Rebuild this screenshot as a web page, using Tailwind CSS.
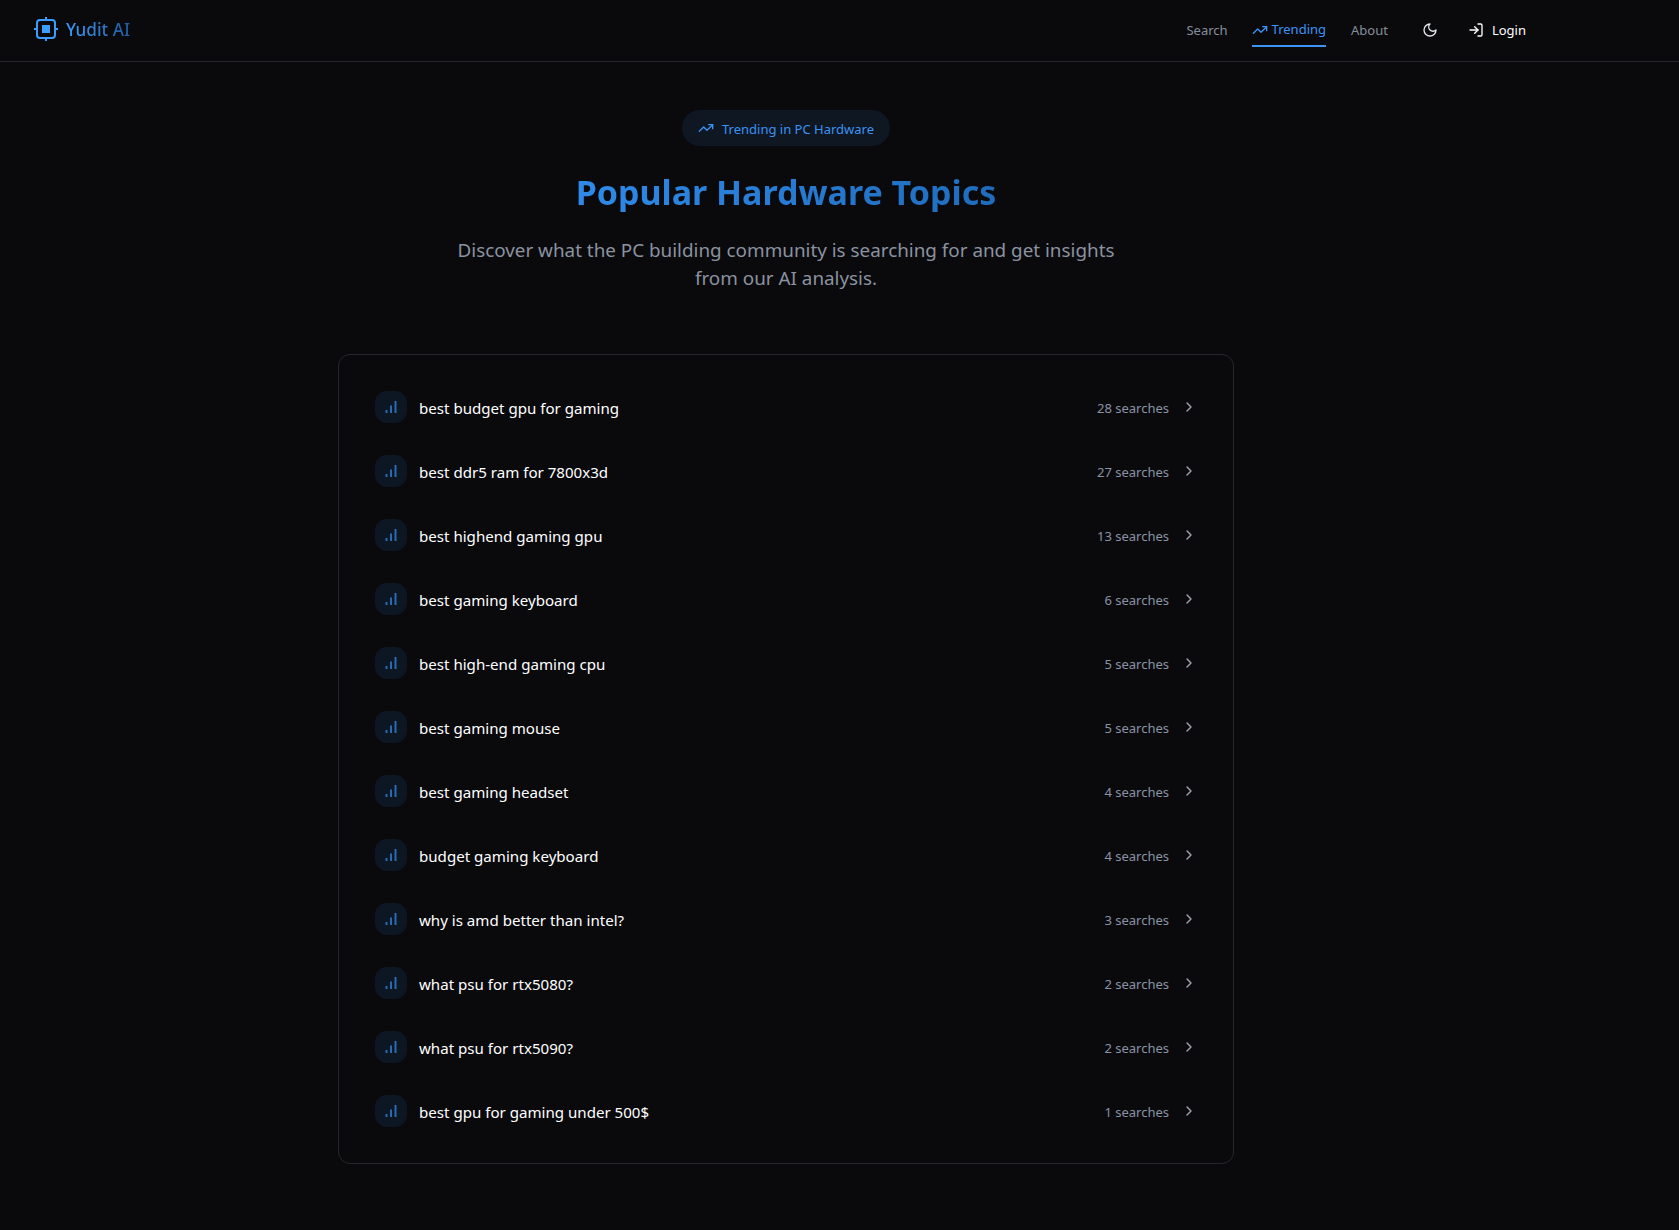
<!DOCTYPE html>
<html lang="en">
<head>
<meta charset="UTF-8">
<title>Trending</title>
<script src="https://cdn.jsdelivr.net/npm/@tailwindcss/browser@4"></script>
</head>
<body class="bg-[#0a0a0d] text-white min-h-screen font-['Noto_Sans',sans-serif]">
<header class="h-[62px] border-b border-[#25272b] flex items-center justify-between pl-[34px] pr-[153px]">
  <div class="flex items-center gap-[8px] text-[17.2px] font-medium mb-[3px]">
    <svg class="text-[#3b9dff]" width="24" height="24" viewBox="0 0 24 24" fill="none" stroke="currentColor" stroke-width="2" stroke-linecap="round" stroke-linejoin="round"><rect x="3" y="3" width="18" height="18" rx="3"/><rect x="8" y="8" width="8" height="8" fill="currentColor" stroke="none"/><path d="M12 0v3M12 21v3M0 12h3M21 12h3"/></svg>
    <span class="pt-[2px] bg-linear-to-r from-[#3b9dff] to-[#1f5c9e] bg-clip-text text-transparent">Yudit AI</span>
  </div>
  <nav class="flex items-center text-[13px] text-[#868e9b]">
    <a class="mr-[24px]">Search</a>
    <a class="mr-[25px] h-[32px] flex items-center gap-[4px] text-[#3b93f5] border-b-2 border-[#3b93f5] mt-[1px]">
      <svg width="16" height="16" viewBox="0 0 24 24" fill="none" stroke="currentColor" stroke-width="2" stroke-linecap="round" stroke-linejoin="round"><path d="M22 7 13.5 15.5 8.5 10.5 2 17"/><path d="M16 7h6v6"/></svg>
      Trending</a>
    <a class="mr-[34px]">About</a>
    <svg class="mr-[30px] mb-[2px] text-[#e5e7eb]" width="16" height="16" viewBox="0 0 24 24" fill="none" stroke="currentColor" stroke-width="2" stroke-linecap="round" stroke-linejoin="round"><path d="M12 3a6 6 0 0 0 9 9 9 9 0 1 1-9-9Z"/></svg>
    <a class="flex items-center gap-[8px] text-white">
      <svg class="mb-[2px]" width="16" height="16" viewBox="0 0 24 24" fill="none" stroke="currentColor" stroke-width="2" stroke-linecap="round" stroke-linejoin="round"><path d="M15 3h4a2 2 0 0 1 2 2v14a2 2 0 0 1-2 2h-4"/><path d="m10 17 5-5-5-5"/><path d="M15 12H3"/></svg>
      Login</a>
  </nav>
</header>
<main class="w-[1572px] flex flex-col items-center pt-[48px] pb-[66px]">
  <div class="h-[36px] px-[16px] rounded-full bg-[#0e1722] text-[#3b93f5] text-[13px] flex items-center gap-[8px]">
    <svg width="16" height="16" viewBox="0 0 24 24" fill="none" stroke="currentColor" stroke-width="2" stroke-linecap="round" stroke-linejoin="round"><path d="M22 7 13.5 15.5 8.5 10.5 2 17"/><path d="M16 7h6v6"/></svg>
    <span class="pt-[3px]">Trending in PC Hardware</span>
  </div>
  <h1 class="mt-[26px] text-[34px] leading-[40px] font-bold bg-linear-to-r from-[#2f8ae8] to-[#1f6cbd] bg-clip-text text-transparent">Popular Hardware Topics</h1>
  <p class="mt-[24px] w-[672px] text-center text-[18.85px] leading-[28px] text-[#8b92a0]">Discover what the PC building community is searching for and get insights from our AI analysis.</p>
  <ul class="mt-[62px] w-[896px] border border-[#25272b] rounded-[12px] p-[28px] flex flex-col gap-[16px]">
    <li class="h-[48px] flex items-center px-[8px]">
      <span class="w-[32px] h-[32px] rounded-[12px] bg-[#0d1724] text-[#2b6cb5] flex items-center justify-center mr-[12px]"><svg width="18" height="18" viewBox="0 0 24 24" fill="none" stroke="currentColor" stroke-width="2.6"><path d="M18 20V4M12 20V10M6 20v-4"/></svg></span>
      <span class="flex-1 text-[15.1px] pt-[2px]">best budget gpu for gaming</span>
      <span class="text-[13px] text-[#8b93a3] mr-[12px] pt-[3px]">28 searches</span>
      <svg width="16" height="16" viewBox="0 0 24 24" fill="none" stroke="#a3a7ad" stroke-width="2" stroke-linecap="round" stroke-linejoin="round"><path d="m9 18 6-6-6-6"/></svg>
    </li>
    <li class="h-[48px] flex items-center px-[8px]">
      <span class="w-[32px] h-[32px] rounded-[12px] bg-[#0d1724] text-[#2b6cb5] flex items-center justify-center mr-[12px]"><svg width="18" height="18" viewBox="0 0 24 24" fill="none" stroke="currentColor" stroke-width="2.6"><path d="M18 20V4M12 20V10M6 20v-4"/></svg></span>
      <span class="flex-1 text-[15.1px] pt-[2px]">best ddr5 ram for 7800x3d</span>
      <span class="text-[13px] text-[#8b93a3] mr-[12px] pt-[3px]">27 searches</span>
      <svg width="16" height="16" viewBox="0 0 24 24" fill="none" stroke="#a3a7ad" stroke-width="2" stroke-linecap="round" stroke-linejoin="round"><path d="m9 18 6-6-6-6"/></svg>
    </li>
    <li class="h-[48px] flex items-center px-[8px]">
      <span class="w-[32px] h-[32px] rounded-[12px] bg-[#0d1724] text-[#2b6cb5] flex items-center justify-center mr-[12px]"><svg width="18" height="18" viewBox="0 0 24 24" fill="none" stroke="currentColor" stroke-width="2.6"><path d="M18 20V4M12 20V10M6 20v-4"/></svg></span>
      <span class="flex-1 text-[15.1px] pt-[2px]">best highend gaming gpu</span>
      <span class="text-[13px] text-[#8b93a3] mr-[12px] pt-[3px]">13 searches</span>
      <svg width="16" height="16" viewBox="0 0 24 24" fill="none" stroke="#a3a7ad" stroke-width="2" stroke-linecap="round" stroke-linejoin="round"><path d="m9 18 6-6-6-6"/></svg>
    </li>
    <li class="h-[48px] flex items-center px-[8px]">
      <span class="w-[32px] h-[32px] rounded-[12px] bg-[#0d1724] text-[#2b6cb5] flex items-center justify-center mr-[12px]"><svg width="18" height="18" viewBox="0 0 24 24" fill="none" stroke="currentColor" stroke-width="2.6"><path d="M18 20V4M12 20V10M6 20v-4"/></svg></span>
      <span class="flex-1 text-[15.1px] pt-[2px]">best gaming keyboard</span>
      <span class="text-[13px] text-[#8b93a3] mr-[12px] pt-[3px]">6 searches</span>
      <svg width="16" height="16" viewBox="0 0 24 24" fill="none" stroke="#a3a7ad" stroke-width="2" stroke-linecap="round" stroke-linejoin="round"><path d="m9 18 6-6-6-6"/></svg>
    </li>
    <li class="h-[48px] flex items-center px-[8px]">
      <span class="w-[32px] h-[32px] rounded-[12px] bg-[#0d1724] text-[#2b6cb5] flex items-center justify-center mr-[12px]"><svg width="18" height="18" viewBox="0 0 24 24" fill="none" stroke="currentColor" stroke-width="2.6"><path d="M18 20V4M12 20V10M6 20v-4"/></svg></span>
      <span class="flex-1 text-[15.1px] pt-[2px]">best high-end gaming cpu</span>
      <span class="text-[13px] text-[#8b93a3] mr-[12px] pt-[3px]">5 searches</span>
      <svg width="16" height="16" viewBox="0 0 24 24" fill="none" stroke="#a3a7ad" stroke-width="2" stroke-linecap="round" stroke-linejoin="round"><path d="m9 18 6-6-6-6"/></svg>
    </li>
    <li class="h-[48px] flex items-center px-[8px]">
      <span class="w-[32px] h-[32px] rounded-[12px] bg-[#0d1724] text-[#2b6cb5] flex items-center justify-center mr-[12px]"><svg width="18" height="18" viewBox="0 0 24 24" fill="none" stroke="currentColor" stroke-width="2.6"><path d="M18 20V4M12 20V10M6 20v-4"/></svg></span>
      <span class="flex-1 text-[15.1px] pt-[2px]">best gaming mouse</span>
      <span class="text-[13px] text-[#8b93a3] mr-[12px] pt-[3px]">5 searches</span>
      <svg width="16" height="16" viewBox="0 0 24 24" fill="none" stroke="#a3a7ad" stroke-width="2" stroke-linecap="round" stroke-linejoin="round"><path d="m9 18 6-6-6-6"/></svg>
    </li>
    <li class="h-[48px] flex items-center px-[8px]">
      <span class="w-[32px] h-[32px] rounded-[12px] bg-[#0d1724] text-[#2b6cb5] flex items-center justify-center mr-[12px]"><svg width="18" height="18" viewBox="0 0 24 24" fill="none" stroke="currentColor" stroke-width="2.6"><path d="M18 20V4M12 20V10M6 20v-4"/></svg></span>
      <span class="flex-1 text-[15.1px] pt-[2px]">best gaming headset</span>
      <span class="text-[13px] text-[#8b93a3] mr-[12px] pt-[3px]">4 searches</span>
      <svg width="16" height="16" viewBox="0 0 24 24" fill="none" stroke="#a3a7ad" stroke-width="2" stroke-linecap="round" stroke-linejoin="round"><path d="m9 18 6-6-6-6"/></svg>
    </li>
    <li class="h-[48px] flex items-center px-[8px]">
      <span class="w-[32px] h-[32px] rounded-[12px] bg-[#0d1724] text-[#2b6cb5] flex items-center justify-center mr-[12px]"><svg width="18" height="18" viewBox="0 0 24 24" fill="none" stroke="currentColor" stroke-width="2.6"><path d="M18 20V4M12 20V10M6 20v-4"/></svg></span>
      <span class="flex-1 text-[15.1px] pt-[2px]">budget gaming keyboard</span>
      <span class="text-[13px] text-[#8b93a3] mr-[12px] pt-[3px]">4 searches</span>
      <svg width="16" height="16" viewBox="0 0 24 24" fill="none" stroke="#a3a7ad" stroke-width="2" stroke-linecap="round" stroke-linejoin="round"><path d="m9 18 6-6-6-6"/></svg>
    </li>
    <li class="h-[48px] flex items-center px-[8px]">
      <span class="w-[32px] h-[32px] rounded-[12px] bg-[#0d1724] text-[#2b6cb5] flex items-center justify-center mr-[12px]"><svg width="18" height="18" viewBox="0 0 24 24" fill="none" stroke="currentColor" stroke-width="2.6"><path d="M18 20V4M12 20V10M6 20v-4"/></svg></span>
      <span class="flex-1 text-[15.1px] pt-[2px]">why is amd better than intel?</span>
      <span class="text-[13px] text-[#8b93a3] mr-[12px] pt-[3px]">3 searches</span>
      <svg width="16" height="16" viewBox="0 0 24 24" fill="none" stroke="#a3a7ad" stroke-width="2" stroke-linecap="round" stroke-linejoin="round"><path d="m9 18 6-6-6-6"/></svg>
    </li>
    <li class="h-[48px] flex items-center px-[8px]">
      <span class="w-[32px] h-[32px] rounded-[12px] bg-[#0d1724] text-[#2b6cb5] flex items-center justify-center mr-[12px]"><svg width="18" height="18" viewBox="0 0 24 24" fill="none" stroke="currentColor" stroke-width="2.6"><path d="M18 20V4M12 20V10M6 20v-4"/></svg></span>
      <span class="flex-1 text-[15.1px] pt-[2px]">what psu for rtx5080?</span>
      <span class="text-[13px] text-[#8b93a3] mr-[12px] pt-[3px]">2 searches</span>
      <svg width="16" height="16" viewBox="0 0 24 24" fill="none" stroke="#a3a7ad" stroke-width="2" stroke-linecap="round" stroke-linejoin="round"><path d="m9 18 6-6-6-6"/></svg>
    </li>
    <li class="h-[48px] flex items-center px-[8px]">
      <span class="w-[32px] h-[32px] rounded-[12px] bg-[#0d1724] text-[#2b6cb5] flex items-center justify-center mr-[12px]"><svg width="18" height="18" viewBox="0 0 24 24" fill="none" stroke="currentColor" stroke-width="2.6"><path d="M18 20V4M12 20V10M6 20v-4"/></svg></span>
      <span class="flex-1 text-[15.1px] pt-[2px]">what psu for rtx5090?</span>
      <span class="text-[13px] text-[#8b93a3] mr-[12px] pt-[3px]">2 searches</span>
      <svg width="16" height="16" viewBox="0 0 24 24" fill="none" stroke="#a3a7ad" stroke-width="2" stroke-linecap="round" stroke-linejoin="round"><path d="m9 18 6-6-6-6"/></svg>
    </li>
    <li class="h-[48px] flex items-center px-[8px]">
      <span class="w-[32px] h-[32px] rounded-[12px] bg-[#0d1724] text-[#2b6cb5] flex items-center justify-center mr-[12px]"><svg width="18" height="18" viewBox="0 0 24 24" fill="none" stroke="currentColor" stroke-width="2.6"><path d="M18 20V4M12 20V10M6 20v-4"/></svg></span>
      <span class="flex-1 text-[15.1px] pt-[2px]">best gpu for gaming under 500$</span>
      <span class="text-[13px] text-[#8b93a3] mr-[12px] pt-[3px]">1 searches</span>
      <svg width="16" height="16" viewBox="0 0 24 24" fill="none" stroke="#a3a7ad" stroke-width="2" stroke-linecap="round" stroke-linejoin="round"><path d="m9 18 6-6-6-6"/></svg>
    </li>
  </ul>
</main>
</body>
</html>
